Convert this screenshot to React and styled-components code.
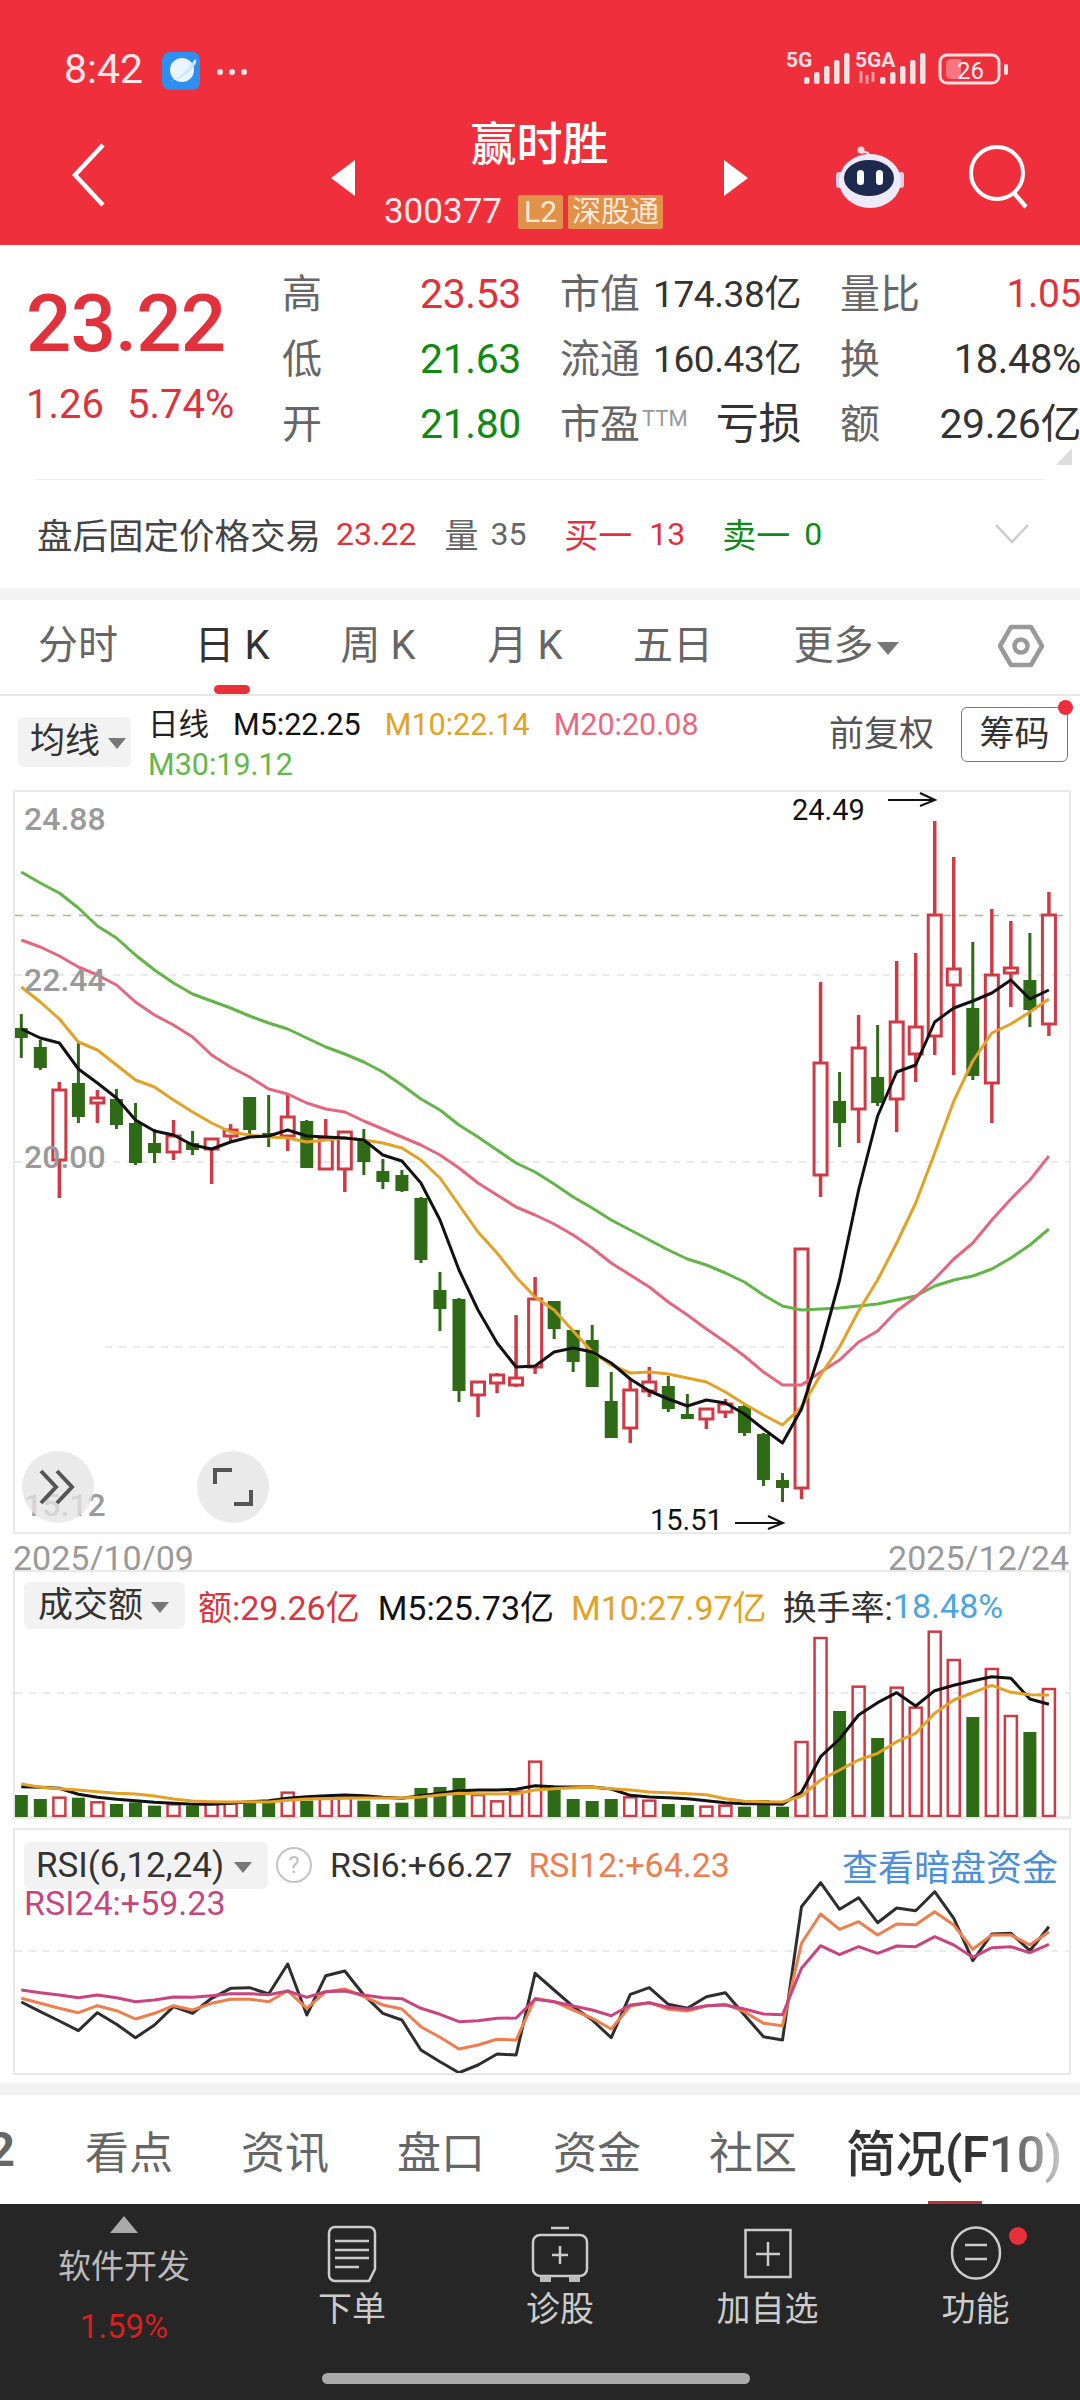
import React from 'react'
import styled, { createGlobalStyle } from 'styled-components'

const RED = '#e0323c'
const GREEN = '#0f8a12'
const FONT = `Roboto, "Noto Sans CJK SC", sans-serif`

// [high, body top, body bottom, low, up]
const CANDLES = [
  [1014,1028,1038,1058,0],[1040,1047,1068,1070,0],[1082,1090,1160,1198,1],[1043,1083,1117,1123,0],[1090,1098,1103,1123,1],
  [1089,1099,1125,1129,0],[1103,1123,1163,1165,0],[1129,1143,1153,1163,0],[1120,1136,1152,1160,1],[1131,1143,1150,1155,0],
  [1138,1139,1149,1184,1],[1124,1130,1136,1142,1],[1097,1097,1130,1134,0],[1095,1133,1136,1147,0],[1093,1117,1136,1151,1],
  [1120,1121,1168,1168,0],[1119,1139,1169,1169,1],[1132,1132,1169,1192,1],[1129,1140,1162,1175,0],[1159,1171,1182,1189,0],
  [1170,1175,1191,1192,0],[1197,1198,1260,1263,0],[1272,1290,1309,1331,0],[1298,1299,1391,1402,0],[1382,1382,1395,1417,1],
  [1373,1375,1383,1393,1],[1315,1378,1385,1387,1],[1277,1299,1367,1374,1],[1301,1301,1329,1339,0],[1330,1330,1362,1372,0],
  [1325,1340,1387,1387,0],[1372,1401,1438,1438,0],[1379,1390,1428,1443,1],[1367,1382,1391,1397,1],[1376,1386,1409,1412,0],
  [1394,1414,1419,1419,0],[1409,1409,1419,1429,1],[1399,1404,1412,1418,1],[1404,1406,1433,1436,0],[1433,1434,1480,1486,0],
  [1473,1480,1488,1502,0],[1249,1249,1488,1499,1],[982,1063,1175,1197,1],[1072,1101,1123,1147,0],[1015,1048,1109,1143,1],
  [1025,1077,1103,1106,0],[961,1022,1099,1132,1],[953,1027,1054,1082,1],[821,915,1036,1055,1],[857,969,985,1075,1],
  [942,1008,1076,1080,0],[909,975,1083,1123,1],[921,968,973,1007,1],[933,980,1010,1027,0],[892,915,1024,1036,1],
]

const M5 = [1029,1038,1043,1069,1083,1098,1120,1131,1135,1145,1149,1142,1137,1136,1130,1136,1137,1138,1140,1155,1161,1183,1220,1270,1310,1343,1367,1366,1352,1348,1352,1363,1379,1391,1399,1406,1400,1403,1414,1429,1443,1409,1350,1280,1190,1116,1072,1065,1022,1008,1001,993,980,999,990]
const M10 = [987,1002,1019,1042,1050,1065,1080,1087,1100,1112,1123,1132,1135,1137,1138,1142,1140,1138,1140,1143,1148,1160,1178,1205,1232,1253,1277,1297,1310,1331,1352,1365,1373,1372,1374,1378,1382,1392,1404,1415,1425,1407,1375,1347,1311,1280,1243,1203,1153,1101,1061,1033,1024,1012,999]
const M20 = [940,947,956,967,975,985,1002,1015,1025,1037,1055,1067,1077,1089,1094,1103,1109,1112,1121,1129,1137,1145,1155,1168,1183,1195,1207,1215,1224,1235,1248,1263,1275,1287,1302,1315,1329,1342,1356,1372,1385,1385,1372,1360,1342,1331,1311,1297,1279,1259,1243,1220,1199,1180,1156]
const M30 = [872,883,893,908,926,938,955,970,983,994,1001,1008,1016,1023,1029,1038,1047,1054,1062,1072,1085,1099,1110,1125,1137,1150,1163,1172,1184,1197,1208,1220,1230,1240,1250,1259,1265,1273,1282,1295,1306,1310,1309,1308,1306,1304,1300,1296,1286,1280,1276,1269,1258,1245,1229]

// all below are read off a 3x crop, hence the division in toY
const VOL = [705,717,713,713,727,732,727,737,733,737,730,730,728,728,698,722,716,713,722,732,728,684,681,654,705,724,695,605,690,717,723,717,712,722,732,735,740,737,740,720,740,546,234,453,380,534,383,443,215,300,471,327,468,516,387]
const VOL5 = [680,682,685,703,712,718,722,727,730,733,733,730,725,722,715,710,707,705,707,712,715,707,700,692,690,690,688,677,680,681,681,687,706,711,713,716,722,728,731,731,733,697,590,537,465,428,398,438,392,376,362,350,355,417,433]
const VOL10 = [672,682,686,690,695,700,702,708,717,723,725,726,725,726,721,717,716,715,714,714,714,711,705,700,701,702,701,690,686,683,682,686,690,696,698,701,704,716,724,725,726,708,660,630,600,580,545,520,460,420,398,376,397,404,405]
const RSI6 = [1326,1355,1383,1412,1358,1393,1433,1395,1340,1360,1315,1285,1283,1302,1212,1365,1247,1233,1305,1360,1380,1470,1505,1538,1515,1482,1485,1240,1290,1340,1380,1433,1303,1283,1333,1345,1310,1298,1365,1430,1440,1040,968,1048,1013,1088,1044,1052,995,1075,1202,1122,1120,1172,1100]
const RSI12 = [1315,1330,1345,1358,1337,1352,1377,1360,1337,1350,1330,1318,1318,1325,1292,1345,1295,1287,1310,1335,1347,1400,1432,1467,1455,1438,1440,1315,1325,1350,1375,1407,1338,1328,1348,1353,1338,1333,1355,1390,1397,1150,1062,1108,1085,1125,1092,1094,1055,1095,1168,1125,1125,1155,1115]
const RSI24 = [1290,1298,1305,1313,1305,1313,1325,1320,1311,1312,1307,1301,1301,1304,1293,1312,1295,1293,1305,1313,1316,1345,1363,1385,1382,1375,1374,1318,1325,1338,1350,1367,1335,1328,1342,1348,1337,1335,1347,1362,1364,1225,1157,1184,1160,1180,1158,1160,1130,1155,1192,1163,1160,1178,1153]

const cx = i => 21.3 + i * 19.03
const toY = p => 1560 + p / 3
const pts = (arr, fy = v => v) => arr.map((v, i) => `${cx(i).toFixed(1)},${fy(v).toFixed(1)}`).join(' ')

const C = { red: '#cf3a44', green: '#2f6a16', m5: '#111', m10: '#e3a126', m20: '#e5667f', m30: '#63b548' }

const GlobalStyle = createGlobalStyle`
  html, body { margin: 0; padding: 0; background: #fff; }
  body { width: 1080px; height: 2400px; overflow: hidden; font-family: ${FONT}; }
`

const Page = styled.div`
  width: 1080px;
  height: 2400px;
  overflow: hidden;
  display: flex;
  flex-direction: column;
`

const Header = styled.header`
  height: 245px;
  background: #ef2f3c;
  color: #fff;
  flex: none;
`

const StatusBar = styled.div`
  height: 108px;
  padding: 46px 0 0 64px;
  box-sizing: border-box;
  display: flex;
  align-items: flex-start;
`

const Clock = styled.span`
  font-size: 41px;
  line-height: 46px;
  color: #ffe6e8;
  width: 98px;
`

const AppLogo = styled.svg`
  margin-top: 6px;
`

const Dots = styled.span`
  display: flex;
  gap: 6px;
  margin: 23px 0 0 17px;
  & i { width: 6px; height: 6px; border-radius: 50%; background: #ffe6e8; }
`

const StatusIconSvg = styled.svg`
  display: block;
  margin: -6px 0 0 auto;
`

const NavRow = styled.div`
  display: grid;
  grid-template-columns: 70px 261px 24px 369px 24px 87px 63px 70px 112px;
  align-items: center;
  height: 137px;
`

const NavIcon = styled.svg`
  margin-top: ${p => p.$mt || 0}px;
`

const NavMiddle = styled.div`
  display: flex;
  flex-direction: column;
  align-items: center;
  margin-top: -10px;
`

const NavTitle = styled.div`
  font-size: 46px;
  font-weight: 500;
  line-height: 62px;
`

const CodeRow = styled.div`
  display: flex;
  align-items: center;
  gap: 5px;
  font-size: 35px;
  line-height: 36px;
  margin: 19px 32px 0 0;
  & > b { font-weight: 400; margin-right: 11px; color: #ffe6e8; }
`

const Badge = styled.span`
  background: #e0914a;
  color: #ffe9d8;
  border-radius: 2px;
  height: 34px;
  line-height: 34px;
  padding: 0 ${p => p.$pad}px;
  font-size: ${p => p.$size}px;
`

const Quote = styled.section`
  height: 343px;
  flex: none;
  box-sizing: border-box;
  position: relative;
`

const QuoteGrid = styled.div`
  display: grid;
  grid-template-columns: 243px 239px 241px 241px;
  column-gap: 39px;
  grid-auto-rows: 65px;
  padding-top: 17px;
  height: 234px;
  box-sizing: border-box;
  align-items: center;
`

const BigPrice = styled.div`
  grid-row: 1 / span 3;
  padding-left: 26px;
  align-self: start;
  font-size: 80px;
  font-weight: 500;
  letter-spacing: -1px;
  line-height: 80px;
  color: ${RED};
  margin-top: 22px;
  white-space: nowrap;
  & > small {
    display: flex;
    gap: 23px;
    font-size: 40px;
    line-height: 46px;
    font-weight: 400;
    letter-spacing: 0;
    margin-top: 18px;
  }
`

const QCell = styled.div`
  display: flex;
  justify-content: space-between;
  align-items: center;
  white-space: nowrap;
`

const QLabel = styled.span`
  font-size: 40px;
  color: #666;
  line-height: 65px;
  & > sup { font-size: 22px; vertical-align: 12px; line-height: 0; color: #999; margin-left: 2px; }
`

const QValue = styled.span`
  font-size: ${p => p.$size || 40}px;
  color: ${p => p.$color || '#333'};
  line-height: 65px;
  letter-spacing: -0.4px;
`

const Fold = styled.i`
  position: absolute;
  right: 8px;
  top: 203px;
  width: 0;
  height: 0;
  border-left: 16px solid transparent;
  border-bottom: 17px solid #ddd;
`

const Divider = styled.div`
  margin: 0 35px;
  border-top: 1px solid #eee;
`

const AfterRow = styled.div`
  display: flex;
  align-items: center;
  height: 107px;
  padding-left: 37px;
  font-size: 34px;
  white-space: nowrap;
`

const AfterText = styled.span`
  color: ${p => p.$color || '#444'};
  font-size: ${p => p.$size || 34}px;
  margin-right: ${p => p.$gap || 0}px;
`

const Strip = styled.div`
  flex: none;
  height: ${p => p.$h}px;
  margin-top: ${p => p.$mt || 0}px;
  background: #f3f3f3;
`

const TabBar = styled.nav`
  height: 96px;
  flex: none;
  box-sizing: border-box;
  border-bottom: 2px solid #e8e8e8;
  display: grid;
  grid-template-columns: 156px 152px 140px 154px 142px 204px 132px;
  align-items: center;
`

const Tab = styled.div`
  position: relative;
  height: 94px;
  line-height: 91px;
  text-align: center;
  font-size: 40px;
  color: ${p => (p.$active ? '#333' : '#666')};
  white-space: nowrap;
  ${p => p.$active && `
    &::after {
      content: '';
      position: absolute;
      left: 50%;
      margin-left: -18px;
      bottom: 0;
      width: 36px;
      height: 9px;
      border-radius: 5px;
      background: #e8303a;
    }
  `}
`

const HexIcon = styled.svg`
  margin: -2px 0 0 50px;
`

const Caret = styled.i`
  display: inline-block;
  width: 0;
  height: 0;
  margin-left: ${p => p.$ml || 7}px;
  vertical-align: middle;
  border-left: ${p => p.$s || 9}px solid transparent;
  border-right: ${p => p.$s || 9}px solid transparent;
  border-top: ${p => (p.$s || 9) + 2}px solid #777;
`

const LegendRow = styled.div`
  height: 94px;
  flex: none;
  display: flex;
  align-items: flex-start;
  padding-left: 18px;
  position: relative;
`

const SelectBox = styled.div`
  background: #f2f2f2;
  border-radius: 6px;
  height: ${p => p.$h || 48}px;
  line-height: ${p => p.$h || 48}px;
  width: ${p => p.$w}px;
  margin-top: ${p => p.$mt || 0}px;
  box-sizing: border-box;
  padding-left: ${p => p.$pl || 12}px;
  font-size: 35px;
  color: #333;
  white-space: nowrap;
  flex: none;
`

const MaColumn = styled.div`
  margin-left: 17px;
  font-size: 30.5px;
  line-height: 40px;
  padding-top: 9px;
`

const MaLine = styled.div`
  display: flex;
  gap: 24px;
  white-space: nowrap;
`

const Ma = styled.span`
  color: ${p => p.$c};
`

const FqText = styled.span`
  margin-left: auto;
  margin-top: 18px;
  font-size: 35px;
  line-height: 42px;
  color: #555;
`

const ChipButton = styled.div`
  position: relative;
  margin: 11px 12px 0 27px;
  width: 107px;
  height: 55px;
  box-sizing: border-box;
  border: 1px solid #777;
  border-radius: 6px;
  font-size: 35px;
  line-height: 53px;
  text-align: center;
  color: #333;
  &::after {
    content: '';
    position: absolute;
    right: -6px;
    top: -8px;
    width: 15px;
    height: 15px;
    border-radius: 50%;
    background: #f02b3a;
  }
`

const Frame = styled.div`
  flex: none;
  position: relative;
  height: ${p => p.$h}px;
  margin: ${p => p.$mt || 0}px 9px 0 13px;
  box-sizing: border-box;
  border: 2px solid #e9e9e9;
  & > svg { display: block; width: 100%; height: 100%; }
`

const PriceTag = styled.span`
  position: absolute;
  left: 9px;
  top: ${p => p.$top}px;
  font-size: 32px;
  line-height: 36px;
  font-weight: 500;
  color: #9a9a9a;
`

const Extreme = styled.span`
  position: absolute;
  left: ${p => p.$left}px;
  top: ${p => p.$top}px;
  font-size: 29px;
  line-height: 34px;
  color: #111;
`

const RoundButton = styled.div`
  position: absolute;
  left: ${p => p.$left}px;
  top: 659px;
  width: 72px;
  height: 72px;
  border-radius: 50%;
  background: rgba(228, 228, 228, 0.78);
  display: flex;
  align-items: center;
  justify-content: center;
`

const DateRow = styled.div`
  flex: none;
  height: 36px;
  display: flex;
  justify-content: space-between;
  padding: 0 11px 0 13px;
  font-size: 34px;
  line-height: 48px;
  color: #9a9a9a;
  overflow: hidden;
`

const PanelLegend = styled.div`
  position: absolute;
  left: 9px;
  right: 9px;
  top: ${p => p.$top}px;
  display: flex;
  align-items: center;
  font-size: 34px;
  white-space: nowrap;
`

const LegendText = styled.span`
  color: ${p => p.$c || '#222'};
  margin-left: ${p => p.$ml || 0}px;
`

const LinkText = styled.span`
  margin-left: auto;
  margin-right: 2px;
  font-size: 36px;
  color: #4a8fd8;
`

const HelpMark = styled.span`
  width: 32px;
  height: 32px;
  border: 2px solid #c4c4c4;
  border-radius: 50%;
  font-size: 24px;
  line-height: 32px;
  text-align: center;
  color: #c0c0c0;
  margin-left: 8px;
  flex: none;
`

const Rsi24Text = styled.div`
  position: absolute;
  left: 9px;
  top: 53px;
  font-size: 34px;
  line-height: 40px;
  color: #c8457f;
`

const SubTabs = styled.nav`
  flex: none;
  height: 109px;
  display: flex;
  align-items: center;
  font-size: 44px;
  color: #666;
  white-space: nowrap;
  position: relative;
  overflow: hidden;
`

const CutTab = styled.span`
  width: 15px;
  overflow: hidden;
  direction: rtl;
  font-size: 48px;
  font-weight: 700;
  margin-right: 70px;
`

const SubTab = styled.span`
  margin-right: 68px;
`

const ActiveSubTab = styled.span`
  margin-left: -19px;
  font-size: 50px;
  font-weight: 500;
  letter-spacing: -0.5px;
  background: linear-gradient(90deg, #333 62%, #777 84%, #ccc 100%);
  background-clip: text;
  -webkit-background-clip: text;
  color: transparent;
  &::after {
    content: '';
    position: absolute;
    left: 928px;
    bottom: 0;
    width: 54px;
    height: 3px;
    background: #b33;
  }
`

const BottomBar = styled.footer`
  flex: 1;
  background: #262626;
  position: relative;
  display: grid;
  grid-template-columns: 248px 208px 208px 207px 209px;
  padding-top: 12px;
  box-sizing: border-box;
`

const Index = styled.div`
  text-align: center;
  color: #bbb;
  font-size: 33px;
  & i {
    display: block;
    width: 0;
    height: 0;
    margin: 0 auto 14px;
    border-left: 14px solid transparent;
    border-right: 14px solid transparent;
    border-bottom: 17px solid #aaa;
  }
  & b { display: block; font-weight: 400; line-height: 40px; }
  & em { display: block; font-style: normal; color: #d81e1e; line-height: 40px; margin-top: 20px; }
`

const Action = styled.div`
  display: flex;
  flex-direction: column;
  align-items: center;
  color: #ccc;
  font-size: 34px;
  line-height: 42px;
  position: relative;
  padding-top: 7px;
  & > svg { display: block; margin-top: 2px; margin-bottom: 5px; }
`

const RedDot = styled.i`
  position: absolute;
  right: 53px;
  top: 11px;
  width: 18px;
  height: 18px;
  border-radius: 50%;
  background: #e8303a;
`

const HomeBar = styled.div`
  position: absolute;
  left: 322px;
  top: 169px;
  width: 428px;
  height: 11px;
  border-radius: 6px;
  background: #aaa;
`

function SignalBars({ x, withArrows }) {
  const hs = [7, 12, 18, 24, 31]
  return (
    <g fill="#ffdfe2">
      {hs.map((h, i) => (
        <rect key={i} x={x + i * 10} y={84 - h} width="5.5" height={h} rx="2" />
      ))}
      {withArrows && (
        <path d="M861 71 v12 M867 75 v9 M873 72 v10" stroke="#f99aa2" strokeWidth="3" />
      )}
    </g>
  )
}

function StatusIcons() {
  return (
    <StatusIconSvg width="300" height="60" viewBox="780 40 300 60">
      <text x="786" y="67" fontFamily={FONT} fontWeight="700" fontSize="21" fill="#ffdfe2">5G</text>
      <SignalBars x={804} />
      <text x="855" y="67" fontFamily={FONT} fontWeight="700" fontSize="21" fill="#ffdfe2">5GA</text>
      <SignalBars x={880} withArrows />
      <rect x="940" y="55" width="59" height="28" rx="7" fill="none" stroke="#ffdfe2" strokeWidth="3" />
      <path d="M951 59 h10 v20 h-10 a5 5 0 0 1 -5 -5 v-10 a5 5 0 0 1 5 -5z" fill="#f8757f" />
      <rect x="1004" y="64" width="4" height="11" rx="2" fill="#ffdfe2" />
      <text x="957" y="79" fontFamily={FONT} fontSize="24" fill="#ffeef0">26</text>
    </StatusIconSvg>
  )
}

function AppIcon() {
  return (
    <AppLogo width="38" height="38" viewBox="0 0 38 38">
      <rect width="38" height="38" rx="8" fill="#2f8ff0" />
      <circle cx="20" cy="18" r="12" fill="#eaf5fd" />
      <path d="M6 29 Q20 27 33 7 Q36 9 32 14 Q24 27 6 29z" fill="#cfe6f8" />
    </AppLogo>
  )
}

function Robot() {
  return (
    <svg width="70" height="64" viewBox="0 0 70 64">
      <circle cx="26" cy="5" r="3.5" fill="#f2dfe5" />
      <path d="M26 8 Q34 5 34 12" fill="none" stroke="#f2dfe5" strokeWidth="2" />
      <rect x="1" y="27" width="6" height="16" rx="3" fill="#d8d0ec" />
      <rect x="63" y="27" width="6" height="16" rx="3" fill="#d8d0ec" />
      <ellipse cx="35" cy="36" rx="31" ry="27" fill="#efeaf8" />
      <ellipse cx="34" cy="33" rx="25" ry="18" fill="#1d2a4d" />
      <rect x="22" y="25" width="7" height="15" rx="3.5" fill="#fff" />
      <rect x="41" y="25" width="7" height="15" rx="3.5" fill="#fff" />
    </svg>
  )
}

function ChartGrid({ lines, x0 = 15, x1 = 1070 }) {
  return lines.map(y => (
    <line key={y} x1={x0} x2={x1} y1={y} y2={y} stroke="#e3e3e3" strokeWidth="1.5" strokeDasharray="7 7" />
  ))
}

function Candle({ i, data }) {
  const [high, top, bottom, low, up] = data
  const x = cx(i)
  if (up) {
    return (
      <g stroke={C.red} fill="none">
        <line x1={x} x2={x} y1={high} y2={top} strokeWidth="3.5" />
        <line x1={x} x2={x} y1={bottom} y2={low} strokeWidth="3.5" />
        <rect x={x - 6.5} y={top} width="13" height={bottom - top} strokeWidth="3" />
      </g>
    )
  }
  return (
    <g fill={C.green} stroke={C.green}>
      <line x1={x} x2={x} y1={high} y2={low} strokeWidth="3" />
      <rect x={x - 6.5} y={top} width="13" height={bottom - top} strokeWidth="0" />
    </g>
  )
}

const Line = ({ points, color, width = 3 }) => (
  <polyline points={points} fill="none" stroke={color} strokeWidth={width} strokeLinejoin="round" />
)

function Arrow({ x1, x2, y }) {
  return <path d={`M${x1} ${y} H${x2} M${x2 - 15} ${y - 7} L${x2} ${y} L${x2 - 15} ${y + 6}`} fill="none" stroke="#111" strokeWidth="2" />
}

function MainChart() {
  return (
    <svg viewBox="15 792 1054 740">
      <line x1="15" x2="1070" y1="915.5" y2="915.5" stroke="#bfae8f" strokeWidth="1.5" strokeDasharray="8 8" />
      <ChartGrid lines={[975, 1162]} />
      <ChartGrid lines={[1347]} x0={105} />
      {CANDLES.map((c, i) => <Candle key={i} i={i} data={c} />)}
      <Line points={pts(M30)} color={C.m30} />
      <Line points={pts(M20)} color={C.m20} />
      <Line points={pts(M10)} color={C.m10} />
      <Line points={pts(M5)} color={C.m5} />
      <Arrow x1={888} x2={935} y={800} />
      <Arrow x1={735} x2={783} y={1523} />
    </svg>
  )
}

function VolumeChart() {
  return (
    <svg viewBox="15 1572 1054 245">
      <ChartGrid lines={[1693]} />
      <line x1="15" x2="1070" y1="1817" y2="1817" stroke="#e9e9e9" strokeWidth="2" />
      {VOL.map((p, i) => {
        const up = CANDLES[i][4]
        const y = toY(p)
        return up
          ? <rect key={i} x={cx(i) - 6} y={y} width="12" height={1816 - y} fill="none" stroke={C.red} strokeWidth="2.5" />
          : <rect key={i} x={cx(i) - 6.5} y={y} width="13" height={1817 - y} fill={C.green} />
      })}
      <Line points={pts(VOL5, toY)} color={C.m5} />
      <Line points={pts(VOL10, toY)} color={C.m10} />
    </svg>
  )
}

function RsiChart() {
  return (
    <svg viewBox="15 1830 1054 243">
      <ChartGrid lines={[1951]} />
      <Line points={pts(RSI6, toY)} color="#2e2e2e" />
      <Line points={pts(RSI12, toY)} color="#ef7d4e" />
      <Line points={pts(RSI24, toY)} color="#c8457f" />
    </svg>
  )
}

export default function App() {
  return (
    <Page>
      <GlobalStyle />
      <Header>
        <StatusBar>
          <Clock>8:42</Clock>
          <AppIcon />
          <Dots><i /><i /><i /></Dots>
          <StatusIcons />
        </StatusBar>
        <NavRow>
          <span />
          <NavIcon width="40" height="64" viewBox="0 0 40 64" $mt={-4}>
            <path d="M33 2 L5 32 L33 62" fill="none" stroke="#fff" strokeWidth="4.5" />
          </NavIcon>
          <NavIcon width="24" height="36" viewBox="0 0 24 36" $mt={2}><path d="M24 0 V36 L0 18z" fill="#fff" /></NavIcon>
          <NavMiddle>
            <NavTitle>赢时胜</NavTitle>
            <CodeRow>
              <b>300377</b>
              <Badge $pad={6} $size={30}>L2</Badge>
              <Badge $pad={4} $size={29}>深股通</Badge>
            </CodeRow>
          </NavMiddle>
          <NavIcon width="24" height="36" viewBox="0 0 24 36" $mt={2}><path d="M0 0 V36 L24 18z" fill="#fff" /></NavIcon>
          <span />
          <Robot />
          <span />
          <NavIcon width="62" height="66" viewBox="0 0 62 66">
            <circle cx="29" cy="29" r="26" fill="none" stroke="#fff" strokeWidth="4" />
            <path d="M46 49 L58 63" stroke="#fff" strokeWidth="4.5" />
          </NavIcon>
        </NavRow>
      </Header>

      <Quote>
        <QuoteGrid>
          <BigPrice>
            23.22
            <small><span>1.26</span><span>5.74%</span></small>
          </BigPrice>
          <QCell><QLabel>高</QLabel><QValue $color={RED} $size={41}>23.53</QValue></QCell>
          <QCell><QLabel>市值</QLabel><QValue $size={37}>174.38亿</QValue></QCell>
          <QCell><QLabel>量比</QLabel><QValue $color={RED} $size={39}>1.05</QValue></QCell>
          <QCell><QLabel>低</QLabel><QValue $color={GREEN} $size={41}>21.63</QValue></QCell>
          <QCell><QLabel>流通</QLabel><QValue $size={37}>160.43亿</QValue></QCell>
          <QCell><QLabel>换</QLabel><QValue $size={40}>18.48%</QValue></QCell>
          <QCell><QLabel>开</QLabel><QValue $color={GREEN} $size={41}>21.80</QValue></QCell>
          <QCell><QLabel>市盈<sup>TTM</sup></QLabel><QValue $size={43}>亏损</QValue></QCell>
          <QCell><QLabel>额</QLabel><QValue $size={41}>29.26亿</QValue></QCell>
        </QuoteGrid>
        <Fold />
        <Divider />
        <AfterRow>
          <AfterText $size={35.5} $gap={15}>盘后固定价格交易</AfterText>
          <AfterText $color={RED} $size={32} $gap={28}>23.22</AfterText>
          <AfterText $color="#666" $gap={12}>量</AfterText>
          <AfterText $color="#666" $size={32} $gap={38}>35</AfterText>
          <AfterText $color={RED} $gap={17}>买一</AfterText>
          <AfterText $color={RED} $size={32} $gap={37}>13</AfterText>
          <AfterText $color={GREEN} $gap={14}>卖一</AfterText>
          <AfterText $color={GREEN} $size={32} $gap={173}>0</AfterText>
          <svg width="34" height="20" viewBox="0 0 34 20"><path d="M1 1 L17 18 L33 1" fill="none" stroke="#ccc" strokeWidth="2.5" /></svg>
        </AfterRow>
      </Quote>
      <Strip $h={12} />

      <TabBar>
        <Tab>分时</Tab>
        <Tab $active>日 K</Tab>
        <Tab>周 K</Tab>
        <Tab>月 K</Tab>
        <Tab>五日</Tab>
        <Tab>更多<Caret $ml={3} $s={11} /></Tab>
        <HexIcon width="46" height="44" viewBox="0 0 46 44">
          <path d="M13 3 H33 L44 22 L33 41 H13 L2 22z" fill="none" stroke="#999" strokeWidth="4.5" strokeLinejoin="round" />
          <circle cx="23" cy="22" r="6.5" fill="none" stroke="#999" strokeWidth="4.5" />
        </HexIcon>
      </TabBar>

      <LegendRow>
        <SelectBox $w={113} $h={50} $mt={21}>均线<Caret $ml={8} $s={9} /></SelectBox>
        <MaColumn>
          <MaLine>
            <Ma $c="#222">日线</Ma>
            <Ma $c="#111">M5:22.25</Ma>
            <Ma $c="#e3a126">M10:22.14</Ma>
            <Ma $c="#e8697f">M20:20.08</Ma>
          </MaLine>
          <MaLine><Ma $c="#62b84b">M30:19.12</Ma></MaLine>
        </MaColumn>
        <FqText>前复权</FqText>
        <ChipButton>筹码</ChipButton>
      </LegendRow>

      <Frame $h={744}>
        <MainChart />
        <PriceTag $top={9}>24.88</PriceTag>
        <PriceTag $top={170}>22.44</PriceTag>
        <PriceTag $top={347}>20.00</PriceTag>
        <PriceTag $top={695}>15.12</PriceTag>
        <Extreme $left={777} $top={1}>24.49</Extreme>
        <Extreme $left={635} $top={711}>15.51</Extreme>
        <RoundButton $left={7}>
          <svg width="40" height="36" viewBox="0 0 40 36"><path d="M3 2 L18 18 L3 34 M19 2 L34 18 L19 34" fill="none" stroke="#555" strokeWidth="4" /></svg>
        </RoundButton>
        <RoundButton $left={182}>
          <svg width="40" height="40" viewBox="0 0 40 40"><path d="M2 17 V3 H19 M38 23 V37 H21" fill="none" stroke="#555" strokeWidth="4" /></svg>
        </RoundButton>
      </Frame>

      <DateRow><span>2025/10/09</span><span>2025/12/24</span></DateRow>

      <Frame $h={249}>
        <VolumeChart />
        <PanelLegend $top={9}>
          <SelectBox $w={161} $h={47} $pl={14}>成交额<Caret $ml={8} $s={9} /></SelectBox>
          <LegendText $c="#d8353f" $ml={13}>额:29.26亿</LegendText>
          <LegendText $c="#111" $ml={18}>M5:25.73亿</LegendText>
          <LegendText $c="#e3a126" $ml={17}>M10:27.97亿</LegendText>
          <LegendText $c="#333" $ml={16}>换手率:</LegendText>
          <LegendText $c="#4aa5e0">18.48%</LegendText>
        </PanelLegend>
      </Frame>

      <Frame $h={247} $mt={9}>
        <RsiChart />
        <PanelLegend $top={9}>
          <SelectBox $w={244} $h={47} $pl={12}>RSI(6,12,24)<Caret $ml={10} $s={9} /></SelectBox>
          <HelpMark>?</HelpMark>
          <LegendText $c="#333" $ml={18}>RSI6:+66.27</LegendText>
          <LegendText $c="#ef7d4e" $ml={16}>RSI12:+64.23</LegendText>
          <LinkText>查看暗盘资金</LinkText>
        </PanelLegend>
        <Rsi24Text>RSI24:+59.23</Rsi24Text>
      </Frame>

      <Strip $h={12} $mt={8} />

      <SubTabs>
        <CutTab>2</CutTab>
        <SubTab>看点</SubTab>
        <SubTab>资讯</SubTab>
        <SubTab>盘口</SubTab>
        <SubTab>资金</SubTab>
        <SubTab>社区</SubTab>
        <ActiveSubTab>简况(F10)</ActiveSubTab>
      </SubTabs>

      <BottomBar>
        <Index>
          <i />
          <b>软件开发</b>
          <em>1.59%</em>
        </Index>
        <Action>
          <svg width="50" height="58" viewBox="0 0 50 58">
            <path d="M8 2 H42 a6 6 0 0 1 6 6 V44 L42 56 H8 a6 6 0 0 1 -6 -6 V8 a6 6 0 0 1 6 -6z" fill="none" stroke="#ccc" strokeWidth="2.5" />
            <path d="M8 16 H42 M8 25 H42 M8 33 H42 M8 42 H32" stroke="#ccc" strokeWidth="2.5" />
          </svg>
          下单
        </Action>
        <Action>
          <svg width="58" height="58" viewBox="0 0 58 58">
            <rect x="2" y="10" width="54" height="41" rx="7" fill="none" stroke="#ccc" strokeWidth="2.5" />
            <path d="M20 3 H38 M29 21 V39 M21 30 H37" stroke="#ccc" strokeWidth="2.5" />
            <path d="M9 51 V57 H20 V51 M38 51 V57 H49 V51" fill="#bbb" />
          </svg>
          诊股
        </Action>
        <Action>
          <svg width="48" height="58" viewBox="0 0 48 58">
            <rect x="1.5" y="5" width="45" height="47" fill="none" stroke="#ccc" strokeWidth="2.5" />
            <path d="M24 17 V41 M12 29 H36" stroke="#ccc" strokeWidth="2.5" />
          </svg>
          加自选
        </Action>
        <Action>
          <svg width="52" height="58" viewBox="0 0 52 58">
            <ellipse cx="26" cy="28" rx="24" ry="25.5" fill="none" stroke="#ccc" strokeWidth="2.5" />
            <path d="M15 20 H37 M15 34 H37" stroke="#ccc" strokeWidth="2.5" />
          </svg>
          功能
          <RedDot />
        </Action>
        <HomeBar />
      </BottomBar>
    </Page>
  )
}
